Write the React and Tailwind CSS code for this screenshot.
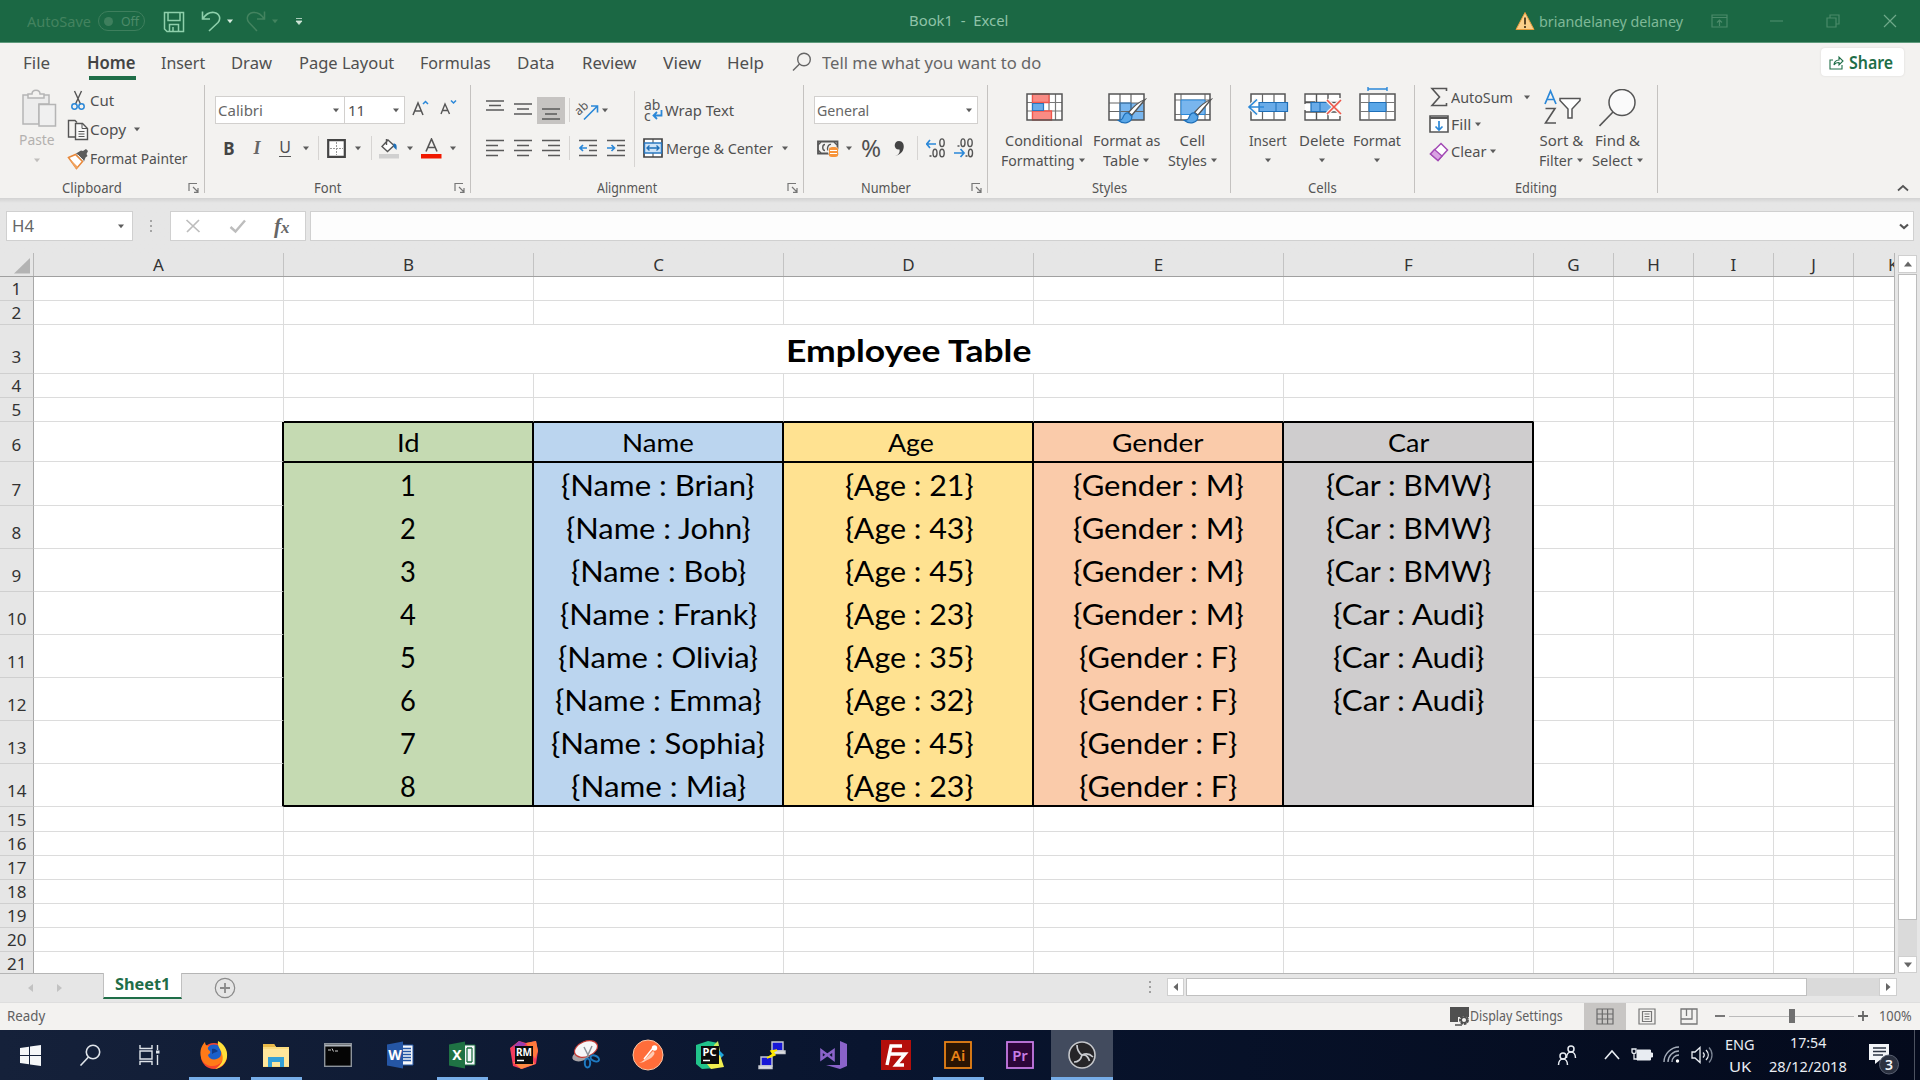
import React, { useLayoutEffect, useRef, useState } from "react";

/* Text that is squeezed or stretched to the width of its box. */
function Fit({ className = "", children }) {
  const outer = useRef(null);
  const inner = useRef(null);
  const [scale, setScale] = useState(1);
  useLayoutEffect(() => {
    setScale(outer.current.clientWidth / inner.current.offsetWidth);
  }, [children]);
  return (
    <span ref={outer} className={"inline-block shrink-0 whitespace-nowrap " + className}>
      <span ref={inner} className="inline-block origin-left" style={{ transform: `scaleX(${scale})` }}>
        {children}
      </span>
    </span>
  );
}

function Svg({ w, h, className = "", children, ...rest }) {
  return (
    <svg width={w} height={h} viewBox={`0 0 ${w} ${h}`} fill="none" className={"shrink-0 " + className} {...rest}>
      {children}
    </svg>
  );
}

const Caret = ({ className = "w-3.5", color = "#5c5c5c" }) => (
  <span className={"flex shrink-0 justify-center " + className}>
    <Svg w={8} h={5}>
      <path d="M1 .5h6L4 4.2z" fill={color} />
    </Svg>
  </span>
);

const Sep = ({ className = "h-6" }) => <span className={"w-px shrink-0 bg-[#d6d4d2] " + className} />;

function Group({ className, title, titleClass, launcher, children }) {
  return (
    <div className={"flex h-[108px] shrink-0 flex-col border-r border-[#c4c2c0] " + className}>
      <div className="h-[88px] shrink-0">{children}</div>
      <div className="flex h-[30px] shrink-0 items-center text-[14px] leading-none text-[#555]">
        <div className="flex flex-1 justify-center">
          <Fit className={titleClass}>{title}</Fit>
        </div>
        {launcher && (
          <Svg w={20} h={12}>
            <path d="M5 9V1.5h8M9 5l5 5M14 6v4.3h-4" stroke="#777" strokeWidth="1.2" />
          </Svg>
        )}
      </div>
    </div>
  );
}

function TitleBar() {
  return (
    <div className="flex h-[43px] items-center border-b border-[#5e9a7c] bg-[#1b6844] text-[15px] leading-none text-[#8fc3a8]">
      <Fit className="ml-[27px] w-16 text-[#43835f]">AutoSave</Fit>
      <div className="ml-[7px] flex h-5 w-[47px] items-center rounded-full border border-[#3e7f5d] text-[13px] text-[#4d8b69]">
        <span className="ml-[5px] size-[9px] rounded-full bg-[#3e7f5d]" />
        <Fit className="ml-2 w-[18px]">Off</Fit>
      </div>
      <Svg w={22} h={22} className="ml-[18px] mt-0.5" stroke="#8ed0ab" strokeWidth="1.5">
        <path d="M1.5 1.5h19v19H4l-2.500-2.500zM5 1.500v8h12v-8M6.500 20.500v-7h9v7M10 16v4" />
      </Svg>
      <Svg w={20} h={22} className="ml-4" stroke="#8ed0ab" strokeWidth="1.600">
        <path d="M1.500 1.500v7.500h7.500M2 8.500C5 4 9 2 13 2.500c6 1 7 6.500 4 10L8 21" />
      </Svg>
      <Caret className="ml-[3px] w-3" color="#d8ecdf" />
      <Svg w={20} h={22} className="ml-2.5" stroke="#43835f" strokeWidth="1.500">
        <path d="M18.500 1.500v7.500h-7.500M18 8.500C15 4 11 2 7 2.500c-6 1-7 6.500-4 10l8 8.500" />
      </Svg>
      <Caret className="ml-[3px] w-3" color="#43835f" />
      <Svg w={8} h={8} className="ml-[14px]">
        <path d="M1 1.500h6M1 4h6L4 7.500z" fill="#cfe6d8" stroke="#cfe6d8" strokeWidth=".8" />
      </Svg>
      <Fit className="ml-[606px] mb-0.5 w-[99px] whitespace-pre">{"Book1  -  Excel"}</Fit>
      <Svg w={20} h={20} className="ml-[507px]">
        <path d="M10 1.500L19 18.500H1z" fill="#fbd08a" stroke="#e59a3c" />
        <path d="M10 6.500v7M10 15v2" stroke="#4c3a1c" strokeWidth="1.800" />
      </Svg>
      <Fit className="ml-1 w-36 text-[#7fb898]">briandelaney delaney</Fit>
      <Svg w={17} h={14} className="ml-[28px]" stroke="#4a8a69" strokeWidth="1.200">
        <path d="M1 1h15v12H1zM1 3.500h15M8.500 12V6M6 8.500L8.500 6 11 8.500" />
      </Svg>
      <Svg w={13} h={4} className="ml-[42px]" stroke="#4a8a69" strokeWidth="1.200">
        <path d="M0 2h13" />
      </Svg>
      <Svg w={14} h={14} className="ml-[43px]" stroke="#4a8a69" strokeWidth="1.200">
        <path d="M1 4h9v9H1zM4 4V1h9v9h-3" />
      </Svg>
      <Svg w={14} h={14} className="ml-[43px]" stroke="#6fa98a" strokeWidth="1.200">
        <path d="M1 1l12 12M13 1L1 13" />
      </Svg>
    </div>
  );
}

function Tabs() {
  return (
    <div className="flex h-[42px] items-start text-[17px] leading-none text-[#4f4f4f]">
      <div className="flex h-[38px] items-center">
        <Fit className="ml-[23px] w-[27px]">File</Fit>
        <div className="relative ml-[37px] w-[49px]">
          <Fit className="w-[49px] font-semibold text-[#444]">Home</Fit>
          <span className="absolute -bottom-[9px] left-0.5 h-1 w-[47px] bg-[#1f6e48]" />
        </div>
        <Fit className="ml-[25px] w-[44px]">Insert</Fit>
        <Fit className="ml-[26px] w-[41px]">Draw</Fit>
        <Fit className="ml-[27px] w-[95px]">Page Layout</Fit>
        <Fit className="ml-[26px] w-[71px]">Formulas</Fit>
        <Fit className="ml-[26px] w-[38px]">Data</Fit>
        <Fit className="ml-[27px] w-[54px]">Review</Fit>
        <Fit className="ml-[27px] w-[38px]">View</Fit>
        <Fit className="ml-[26px] w-[37px]">Help</Fit>
        <Svg w={20} h={20} className="ml-[28px]" stroke="#666" strokeWidth="1.400">
          <circle cx="12" cy="7.500" r="6.300" />
          <path d="M7.500 12L1 18.500" />
        </Svg>
        <Fit className="ml-[10px] w-[219px] text-[#666]">Tell me what you want to do</Fit>
      </div>
      <div className="ml-auto mr-4 mt-[5px] flex h-7 w-[83px] items-center rounded-sm bg-white text-[#1f6e48] shadow-[0_0_2px_#d5d3d1]">
        <Svg w={15} h={15} className="ml-2" stroke="#1f6e48" strokeWidth="1.100">
          <path d="M4 5H1v9h12v-4M5 10c0-3 2-5 5-5V2l4 4-4 4V7.500c-2 0-4 .5-5 2.500z" />
        </Svg>
        <Fit className="ml-[5px] w-[44px] font-semibold">Share</Fit>
      </div>
    </div>
  );
}

function ClipboardGroup() {
  return (
    <Group className="w-[205px]" title="Clipboard" titleClass="w-[60px]" launcher>
      <div className="flex">
        <div className="ml-[18px] flex w-[38px] flex-col items-center text-[#b3b1af]">
          <Svg w={36} h={40} className="ml-1 mt-1" stroke="#b5b5b5" strokeWidth="1.500">
            <path d="M2 6h26v9H18v20H2z" fill="#ececec" />
            <path d="M7 9V5h4c0-5 8-5 8 0h4v4z" fill="#f3f2f0" />
            <path d="M18 15.500h16.500v21.500H18z" fill="#f0f0f0" />
          </Svg>
          <Fit className="mt-px w-9 text-[15px] leading-[18px]">Paste</Fit>
          <Caret className="mt-2.5 w-3" color="#c0bebc" />
        </div>
        <div className="ml-[11px] pt-px">
          <div className="flex h-[29px] items-center">
            <Svg w={22} h={22}>
              <path d="M7.500 1l6 13M14.500 1l-6 13" stroke="#555" strokeWidth="1.400" />
              <circle cx="7.500" cy="16.500" r="2.700" stroke="#2b88d8" strokeWidth="1.500" />
              <circle cx="14.500" cy="16.500" r="2.700" stroke="#2b88d8" strokeWidth="1.500" />
            </Svg>
            <Fit className="ml-px w-6">Cut</Fit>
          </div>
          <div className="flex h-[29px] items-center">
            <Svg w={22} h={22} stroke="#555" strokeWidth="1.400">
              <path d="M8 18H1.500V1.500H8L10 3.500" fill="none" />
              <path d="M8.500 4.500h7l5 5v11h-12z" fill="#f8f8f8" />
              <path d="M15 4.500v5h5M11.500 12.500h6M11.500 15h6M11.500 17.500h6" strokeWidth="1" />
            </Svg>
            <Fit className="ml-px w-9">Copy</Fit>
            <Caret className="ml-[7px]" />
          </div>
          <div className="flex h-[29px] items-center">
            <Svg w={22} h={22}>
              <path d="M1.500 9.500l7-3 7 7-6 7z" fill="#fff" stroke="#e8883a" strokeWidth="1.500" />
              <path d="M2 10l9 9-2 2z" fill="#f0a35e" />
              <path d="M9 5.500l8 8 1.500-4L20.500 8l-1-2 1.500-3-2-2-3 2-2-.500z" fill="#5c5c5c" />
              <path d="M10.500 6.500l6 6" stroke="#f3f2f0" />
            </Svg>
            <Fit className="ml-px w-[98px]">Format Painter</Fit>
          </div>
        </div>
      </div>
    </Group>
  );
}

function FontGroup() {
  return (
    <Group className="w-[266px]" title="Font" titleClass="w-[27px]" launcher>
      <div className="flex h-[39px] items-center pl-2.5 pt-[11px]">
        <div className="flex h-7 w-[130px] items-center border border-[#d2d0ce] bg-white">
          <Fit className="ml-0.5 w-[45px] text-[#666]">Calibri</Fit>
          <Caret className="ml-auto mr-0.5 w-3" />
        </div>
        <div className="flex h-7 w-[60px] items-center border border-l-0 border-[#d2d0ce] bg-white">
          <Fit className="ml-[3px] w-[17px]">11</Fit>
          <Caret className="ml-auto mr-0.5 w-3" />
        </div>
        <Svg w={18} h={18} className="ml-[7px] -mt-1">
          <path d="M1 16L6 4l5 12M3 12h6" stroke="#555" strokeWidth="1.500" />
          <path d="M11 5l2.500-2.500L16 5" stroke="#2b88d8" strokeWidth="1.500" />
        </Svg>
        <Svg w={18} h={18} className="ml-2.5 -mt-1">
          <path d="M1 15L5 5l4.500 10M3 11.500h5" stroke="#555" strokeWidth="1.400" />
          <path d="M11 1.500L13.500 4 16 1.500" stroke="#2b88d8" strokeWidth="1.500" />
        </Svg>
      </div>
      <div className="mt-2.5 flex h-7 items-center pl-2.5 text-[17px]">
        <span className="w-7 text-center font-bold text-[#444]">B</span>
        <span className="w-7 text-center font-['Liberation_Serif'] text-[18px] font-bold italic text-[#666]">I</span>
        <span className="flex w-7 justify-center"><span className="w-3 border-b-[1.500px] border-[#555] pb-px text-center text-[16px]">U</span></span>
        <Caret />
        <Sep className="ml-[5px] h-6" />
        <Svg w={19} h={19} className="ml-2">
          <path d="M1.200 1.200h16.600v16.600H1.200z" fill="#fff" stroke="#444" strokeWidth="2.200" />
          <path d="M9.500 3v13M3 9.500h13" stroke="#999" strokeDasharray="2 1" />
        </Svg>
        <Caret className="ml-[5px] w-3.5" />
        <Sep className="ml-1.5 h-6" />
        <Svg w={20} h={21} className="ml-[7px]">
          <path d="M9 2L3 8.500l5.500 5L15 7.500 9 2zM7.500 1v6" fill="#fff" stroke="#555" strokeWidth="1.400" />
          <path d="M14.500 5.500c3 0 3.500 2 3 6.500l-3-3z" fill="#1e6fb8" />
          <path d="M0 16h20v4.500H0z" fill="#d0d0d0" />
        </Svg>
        <Caret className="ml-1 w-3.5" />
        <Svg w={21} h={21} className="ml-1">
          <path d="M5 13.500L10.500 1l5.500 12.500M7 9.500h7" stroke="#555" strokeWidth="1.600" />
          <path d="M0 16h20.500v4.500H0z" fill="#f01800" />
        </Svg>
        <Caret className="ml-1 w-3.5" />
      </div>
    </Group>
  );
}

const Lines = ({ d, className = "" }) => (
  <Svg w={18} h={20} className={className}>
    <path d={d} stroke="#5a5a5a" strokeWidth="1.600" />
  </Svg>
);

function IndentIcon({ right, className }) {
  return (
    <Svg w={18} h={20} className={className}>
      <path d="M0 2.500h18M10 7.500h8M10 12.500h8M0 17.500h18" stroke="#5a5a5a" strokeWidth="1.600" />
      <path d={right ? "M0 10h7M4.500 7L7.500 10l-3 3" : "M8 10H1M4 7l-3 3 3 3"} stroke="#2b88d8" strokeWidth="1.700" />
    </Svg>
  );
}

function AlignmentGroup() {
  return (
    <Group className="w-[333px]" title="Alignment" titleClass="w-[60px]" launcher>
      <div className="flex">
        <div className="w-[163px]">
          <div className="mt-[11px] flex h-7 items-center">
            <Lines className="ml-[15px] -mt-1.5" d="M0 4h18M3 8.500h12M0 13h18" />
            <Lines className="ml-2.5" d="M0 4h18M3 9h12M0 14h18" />
            <span className="ml-[5px] flex h-[27px] w-7 items-end justify-center bg-[#c6c4c2]">
              <Lines d="M0 5h18M3 10h12M0 15h18" />
            </span>
            <Sep className="ml-1 h-6" />
            <Svg w={22} h={22} className="ml-[7px] overflow-visible">
              <text x="-1" y="12" fontSize="12" fill="#555" fontFamily="Noto Sans" transform="rotate(-42 7 11)">ab</text>
              <path d="M7 20.500L20 7.500M14 7h6.500v6.500" stroke="#2b88d8" strokeWidth="1.600" />
            </Svg>
            <Caret className="w-3" />
          </div>
          <div className="mt-2.5 flex h-7 items-center">
            <Lines className="ml-[15px]" d="M0 2.500h18M0 7.500h12M0 12.500h18M0 17.500h12" />
            <Lines className="ml-2.5" d="M0 2.500h18M3 7.500h12M0 12.500h18M3 17.500h12" />
            <Lines className="ml-2.5" d="M0 2.500h18M6 7.500h12M0 12.500h18M6 17.500h12" />
            <Sep className="ml-[9px] h-6" />
            <IndentIcon className="ml-[9px]" />
            <IndentIcon right className="ml-2.5" />
          </div>
        </div>
        <Sep className="mt-1.5 h-[76px]" />
        <div>
          <div className="mt-[11px] flex h-7 items-center">
            <div className="relative ml-[9px] h-[22px] w-[19px] text-[14px] leading-[11px] text-[#555]">
              <Fit className="block w-4">ab</Fit>
              <Fit className="block w-[7px]">c</Fit>
              <Svg w={11} h={11} className="absolute right-0 bottom-0">
                <path d="M9.500 0v5.500H2M5 2L1.500 5.500 5 9" stroke="#2b88d8" strokeWidth="1.800" />
              </Svg>
            </div>
            <Fit className="ml-0.5 w-[69px]">Wrap Text</Fit>
          </div>
          <div className="mt-2.5 flex h-7 items-center">
            <Svg w={20} h={20} className="ml-2">
              <path d="M1 1h18v18H1z" fill="#fff" stroke="#444" strokeWidth="1.700" />
              <path d="M10 1v4M10 15v4" stroke="#444" />
              <path d="M1.500 5h17v10h-17z" fill="#cfe4f7" stroke="#2b78c0" strokeWidth="1.400" />
              <path d="M4 10h12M6.500 7.500L4 10l2.500 2.500M13.500 7.500L16 10l-2.500 2.500" stroke="#1e6fb8" strokeWidth="1.400" />
            </Svg>
            <Fit className="ml-[3px] w-[107px]">Merge &amp; Center</Fit>
            <Caret className="ml-2" />
          </div>
        </div>
      </div>
    </Group>
  );
}

function NumberGroup() {
  return (
    <Group className="w-[184px]" title="Number" titleClass="w-[50px]" launcher>
      <div className="h-[39px] pl-2.5 pt-[11px]">
        <div className="flex h-7 w-[164px] items-center border border-[#d2d0ce] bg-white">
          <Fit className="ml-0.5 w-[52px] text-[#666]">General</Fit>
          <Caret className="ml-auto mr-0.5 w-3" />
        </div>
      </div>
      <div className="mt-2.5 flex h-7 items-center">
        <Svg w={22} h={20} className="ml-[13px]">
          <path d="M1 3.500h19.500v12H1z" fill="#f3f2f0" stroke="#555" strokeWidth="1.800" />
          <path d="M1 7l3-3M1 12l3 3M20 7l-3-3M8 6.500c-3 0-3 6 0 6M14 6.500c-3-1-5 6-2 6" stroke="#555" strokeWidth="1.400" />
          <ellipse cx="16.500" cy="13.500" rx="5.500" ry="5.500" fill="#f3f2f0" />
          <path d="M12 10.500c0-2 9-2 9 0v7c0 2-9 2-9 0z" fill="#f7943a" />
          <path d="M13 12.500h7M13 15.500h7" stroke="#fff" />
        </Svg>
        <Caret className="ml-1 w-3" />
        <Fit className="ml-1.5 w-5 text-[23px] leading-none">%</Fit>
        <Svg w={13} h={17} className="ml-3">
          <path d="M2 16c4-1 5-4 4.500-6.500C0 10 .5 1 6 1c7 0 7 13-4 15z" fill="#444" />
        </Svg>
        <Sep className="ml-[11px] h-6" />
        <Svg w={20} h={20} className="ml-2">
          <path d="M0 6h10M4 2L.7 6 4 10" stroke="#2b88d8" strokeWidth="1.700" />
          <ellipse cx="16" cy="4.700" rx="2.200" ry="3.800" stroke="#555" strokeWidth="1.400" />
          <ellipse cx="9" cy="15" rx="2" ry="3.800" stroke="#555" strokeWidth="1.400" />
          <ellipse cx="16" cy="15" rx="2.200" ry="3.800" stroke="#555" strokeWidth="1.400" />
          <path d="M3.500 18h2" stroke="#555" strokeWidth="1.600" />
        </Svg>
        <Svg w={20} h={20} className="ml-2">
          <path d="M0 15h10M6.500 11L10 15l-3.500 4" stroke="#2b88d8" strokeWidth="1.700" />
          <ellipse cx="9" cy="4.700" rx="2" ry="3.800" stroke="#555" strokeWidth="1.400" />
          <ellipse cx="16" cy="4.700" rx="2.200" ry="3.800" stroke="#555" strokeWidth="1.400" />
          <ellipse cx="16.500" cy="15" rx="2" ry="3.800" stroke="#555" strokeWidth="1.400" />
          <path d="M3.500 8h2M11.500 18h2" stroke="#555" strokeWidth="1.600" />
        </Svg>
      </div>
    </Group>
  );
}

const Brush = () => (
  <>
    <path d="M38 10.500L25 26l-3.500-2.500C27 17 31 13 38 10.500z" fill="#fff" stroke="#555" strokeWidth="1.300" />
    <path d="M21.500 24c-4-1-5 3-6 5.500-1 1.500-3 2-4 2 5 4 13 3 13.500-4z" fill="#5aa7e8" stroke="#1e6fb8" strokeWidth="1.200" />
  </>
);

/* Big ribbon button: icon above one or two lines of text. */
function BigButton({ className, icon, line1, w1, line2, w2 }) {
  return (
    <div className={"flex shrink-0 flex-col items-center leading-none " + className}>
      <div className="flex h-[45px] items-start pt-1">{icon}</div>
      <div className="flex h-5 items-center"><Fit className={w1}>{line1}</Fit></div>
      <div className="flex h-5 items-center">
        {line2 && <Fit className={w2}>{line2}</Fit>}
        <Caret className={line2 ? "ml-[3px] w-2" : "w-2"} />
      </div>
    </div>
  );
}

function StylesGroup() {
  return (
    <Group className="w-[243px]" title="Styles" titleClass="w-[35px]">
      <div className="flex">
        <BigButton className="ml-3 w-[87px]" line1="Conditional" w1="w-[78px]" line2="Formatting" w2="w-[74px]" icon={
          <Svg w={40} h={36}>
            <path d="M3 5h35v26H3z" fill="#fff" />
            <path d="M3 13.500h35M3 22h35M8.500 5v26M25 5v26M31.500 5v26" stroke="#777" strokeWidth="1.200" />
            <path d="M8.500 5H25v8.500H8.500zM8.500 22h19v9h-19z" fill="#f98b84" stroke="#f0564c" strokeWidth="1.300" />
            <path d="M8.500 14.500h11v7h-11z" fill="#69abe8" stroke="#2b78c0" strokeWidth="1.200" />
            <path d="M3 5h35v26H3z" stroke="#555" strokeWidth="1.500" />
          </Svg>} />
        <BigButton className="ml-[5px] w-[69px]" line1="Format as" w1="w-[67px]" line2="Table" w2="w-9" icon={
          <Svg w={40} h={36}>
            <path d="M2 5h35v26H2z" fill="#fff" />
            <path d="M13 14h24v17H13z" fill="#79b6ee" />
            <path d="M2 14h35M2 22.500h35M13 5v26M24 5v26" stroke="#666" strokeWidth="1.200" />
            <path d="M2 5h35v26H2z" stroke="#555" strokeWidth="1.500" />
            <path d="M13 14h11v17H13z" stroke="#2b78c0" />
            <Brush />
          </Svg>} />
        <BigButton className="ml-[5px] w-[53px]" line1="Cell" w1="w-[26px]" line2="Styles" w2="w-[39px]" icon={
          <Svg w={40} h={36}>
            <path d="M2 5h35v26H2z" fill="#fff" />
            <path d="M2 11h35M2 25.500h35M8 5v26M32 5v26" stroke="#777" strokeWidth="1.200" />
            <path d="M8 11h24v14.500H8z" fill="#79b6ee" stroke="#2b88d8" />
            <path d="M2 5h35v26H2z" stroke="#555" strokeWidth="1.500" />
            <Brush />
          </Svg>} />
      </div>
    </Group>
  );
}

function CellsGroup() {
  return (
    <Group className="w-[184px]" title="Cells" titleClass="w-[29px]">
      <div className="flex">
        <BigButton className="ml-[13px] w-12" line1="Insert" w1="w-[38px]" icon={
          <Svg w={42} h={36}>
            <path d="M4 5h34v26H4z" fill="#fff" stroke="#555" strokeWidth="1.500" />
            <path d="M15.500 5v26M27 5v26" stroke="#666" strokeWidth="1.200" />
            <path d="M12 13.500h28.500v9H12z" fill="#69abe8" stroke="#1e6fb8" strokeWidth="1.200" />
            <path d="M29 13.500v9" stroke="#1e6fb8" />
            <path d="M10 10.500L2 18l8 7.500" stroke="#f3f2f0" strokeWidth="4" />
            <path d="M10 10.500L2 18l8 7.500M3 18h14" stroke="#2b88d8" strokeWidth="1.600" />
          </Svg>} />
        <BigButton className="ml-1.5 w-12" line1="Delete" w1="w-[46px]" icon={
          <Svg w={40} h={36}>
            <path d="M3 5h35v26H3z" fill="#fff" />
            <path d="M38 9V5H3v8h10M3 23v8h35v-4M3 13v2M3 21v2h35M14.500 5v8M26 5v8M14.500 23v8M26 23v8M3 13.500h35" stroke="#555" strokeWidth="1.400" />
            <path d="M9 13.500h17l4 4.500-4 4.500H9z" fill="#69abe8" stroke="#1e6fb8" strokeWidth="1.200" />
            <path d="M18 13.500v9" stroke="#1e6fb8" />
            <path d="M25 11l14 14M39 11L25 25" stroke="#f3f2f0" strokeWidth="4" />
            <path d="M25 11l14 14M39 11L25 25" stroke="#ee5548" strokeWidth="1.600" />
          </Svg>} />
        <BigButton className="ml-1.5 w-[49px]" line1="Format" w1="w-[48px]" icon={
          <Svg w={40} h={36} className="overflow-visible">
            <path d="M3 5h35v26H3z" fill="#fff" stroke="#555" strokeWidth="1.500" />
            <path d="M3 13.500h35M3 22.500h35M12 5v26M29 5v26" stroke="#777" strokeWidth="1.200" />
            <path d="M12 13.500h17v9H12z" fill="#5aa7e8" stroke="#1e6fb8" />
            <path d="M11 0h19M11-2v4M30-2v4" stroke="#2b88d8" strokeWidth="1.400" />
          </Svg>} />
      </div>
    </Group>
  );
}

function EditingGroup() {
  return (
    <Group className="w-[243px]" title="Editing" titleClass="w-[42px]">
      <div className="flex">
        <div className="ml-3.5 w-[104px]">
          <div className="flex h-[25px] items-center">
            <Svg w={20} h={20} className="-mt-px">
              <path d="M17.500 4V1.500H3l7.500 8.500L3 18.500h14.500V16" stroke="#555" strokeWidth="1.600" />
            </Svg>
            <Fit className="ml-0.5 w-[62px]">AutoSum</Fit>
            <Caret className="ml-2 w-3" />
          </div>
          <div className="flex h-7 items-center">
            <Svg w={20} h={18}>
              <path d="M1 1h18v16H1z" fill="#fff" stroke="#555" strokeWidth="1.600" />
              <path d="M1 3h18" stroke="#555" strokeWidth="2" />
              <path d="M10 6v9M6.500 11.500L10 15l3.500-3.500" stroke="#2b88d8" strokeWidth="1.700" />
            </Svg>
            <Fit className="ml-0.5 w-5">Fill</Fit>
            <Caret className="ml-px w-3" />
          </div>
          <div className="flex h-[27px] items-center">
            <Svg w={20} h={20}>
              <path d="M12 1.500L18.500 8l-9.500 10.500L1.500 12z" fill="#fff" stroke="#a34ab5" strokeWidth="1.500" />
              <path d="M5.500 7.500l7.500 6.500-4 4.500L1.500 12z" fill="#d9a3e3" stroke="#a34ab5" strokeWidth="1.300" />
            </Svg>
            <Fit className="ml-0.5 w-[35px]">Clear</Fit>
            <Caret className="ml-px w-3" />
          </div>
        </div>
        <BigButton className="ml-[5px] w-[47px]" line1="Sort &" w1="w-11" line2="Filter" w2="w-[34px]" icon={
          <Svg w={38} h={36}>
            <path d="M2 15L7.500 2 13 15M4 10.500h7" stroke="#2b88d8" strokeWidth="1.700" />
            <path d="M2.500 19.500h9.500L2.500 34H13" stroke="#555" strokeWidth="1.600" />
            <path d="M17 9.500h20v2l-8 8.500v9h-4v-9l-8-8.500z" fill="#fff" stroke="#555" strokeWidth="1.500" />
          </Svg>} />
        <BigButton className="ml-1.5 w-[53px]" line1="Find &" w1="w-[45px]" line2="Select" w2="w-[41px]" icon={
          <Svg w={38} h={38}>
            <circle cx="23" cy="13.500" r="13" fill="#fafafa" stroke="#555" strokeWidth="1.500" />
            <path d="M14 23L.5 37" stroke="#555" strokeWidth="1.600" />
          </Svg>} />
      </div>
    </Group>
  );
}

function Ribbon() {
  return (
    <div className="h-[155px] bg-[#f3f2f0]">
      <Tabs />
      <div className="flex h-[113px] text-[15px] leading-none text-[#505050]">
        <ClipboardGroup />
        <FontGroup />
        <AlignmentGroup />
        <NumberGroup />
        <StylesGroup />
        <CellsGroup />
        <EditingGroup />
        <Svg w={12} h={8} className="mb-[6px] ml-auto mr-[11px] self-end">
          <path d="M1 6.500L6 2l5 4.500" stroke="#555" strokeWidth="1.700" />
        </Svg>
      </div>
    </div>
  );
}

function FormulaBar() {
  return (
    <div className="flex h-[55px] items-start bg-linear-to-b from-[#d2d2d2] to-[#e6e6e6] to-[5px] pt-[13px] text-[16px] leading-none text-[#666]">
      <div className="ml-1.5 flex h-[30px] w-[127px] items-center border border-[#d0d0d0] bg-white">
        <Fit className="ml-[5px] w-[22px]">H4</Fit>
        <Caret className="ml-auto mr-[5px] w-3" />
      </div>
      <Svg w={4} h={16} className="ml-4 mt-2">
        <path d="M1 1h2v2H1zM1 6h2v2H1zM1 11h2v2H1z" fill="#a5a5a5" />
      </Svg>
      <div className="ml-[17px] flex h-[30px] w-[136px] items-center border border-[#d0d0d0] bg-white">
        <Svg w={16} h={16} className="ml-3.5">
          <path d="M1.500 2l13 12M14 2L2 14" stroke="#bdbdbd" strokeWidth="1.700" />
        </Svg>
        <Svg w={18} h={16} className="ml-[28px]">
          <path d="M1.500 9l5 4.500L16 2.500" stroke="#bdbdbd" strokeWidth="2.400" />
        </Svg>
        <span className="ml-[27px] font-['Liberation_Serif'] text-[21px] font-bold italic text-[#666]">f<span className="text-[17px]">x</span></span>
      </div>
      <div className="ml-1 flex h-[30px] w-[1604px] items-center border border-[#d0d0d0] bg-[#fdfdfd]">
        <Svg w={10} h={7} className="ml-auto mr-1">
          <path d="M1 1.500L5 5l4-3.500" stroke="#555" strokeWidth="2.200" />
        </Svg>
      </div>
    </div>
  );
}

const COLUMNS = [
  ["A", "w-[250px]"], ["B", "w-[250px]"], ["C", "w-[250px]"], ["D", "w-[250px]"], ["E", "w-[250px]"], ["F", "w-[250px]"],
  ["G", "w-20"], ["H", "w-20"], ["I", "w-20"], ["J", "w-20"],
];

const FILLS = ["", "bg-[#c5dab2]", "bg-[#bbd5ef]", "bg-[#ffe291]", "bg-[#facbaa]", "bg-[#cfcdce]"];

const HEADINGS = [["Id", "w-[23px]"], ["Name", "w-[72px]"], ["Age", "w-[46px] ml-1.5"], ["Gender", "w-[92px]"], ["Car", "w-[41px]"]];

const M = ["{Gender : M}", "w-[171px]"];
const F = ["{Gender : F}", "w-[158px]"];
const BMW = ["{Car : BMW}", "w-[165px]"];
const AUDI = ["{Car : Audi}", "w-[151px]"];
const DATA = [
  [["{Name : Brian}", "w-[194px]"], "{Age : 21}", M, BMW],
  [["{Name : John}", "w-[185px]"], "{Age : 43}", M, BMW],
  [["{Name : Bob}", "w-[175px]"], "{Age : 45}", M, BMW],
  [["{Name : Frank}", "w-[197px]"], "{Age : 23}", M, AUDI],
  [["{Name : Olivia}", "w-[200px]"], "{Age : 35}", F, AUDI],
  [["{Name : Emma}", "w-[207px]"], "{Age : 32}", F, AUDI],
  [["{Name : Sophia}", "w-[214px]"], "{Age : 45}", F, null],
  [["{Name : Mia}", "w-[175px]"], "{Age : 23}", F, null],
];

const ROW_HEIGHTS = [
  "h-6", "h-6", "h-[49px]", "h-6", "h-6", "h-10", "h-11", "h-[43px]", "h-[43px]", "h-[43px]", "h-[43px]", "h-[43px]",
  "h-[43px]", "h-[43px]", "h-[25px]", "h-6", "h-6", "h-6", "h-6", "h-6", "h-[22px]",
];

function RowNumber({ n }) {
  const tall = n === 3 || (n >= 6 && n <= 14);
  return (
    <div className={"flex w-[34px] shrink-0 items-end justify-center border-b border-r border-b-[#cfcfcf] border-r-[#a8a8a8] bg-[#e6e6e6] text-[17px] text-[#333] " + (n === 21 ? "border-b-transparent" : "")}>
      <Fit className={(n > 9 ? "w-[19px]" : "w-[10px]") + " leading-6 " + (n === 3 || n === 6 ? "mb-1" : tall ? "mb-[3px]" : n === 21 ? "-mb-[3px]" : "-mb-px")}>{n}</Fit>
    </div>
  );
}

function cellContent(n, c) {
  if (n === 6) return HEADINGS[c - 1];
  const row = DATA[n - 7];
  if (c === 1) return [String(n - 6), "w-4"];
  if (c === 3) return [row[1], "w-[129px] ml-[3px]"];
  return c === 2 ? row[0] : row[c - 2];
}

function Cell({ n, c }) {
  const inTable = n >= 6 && n <= 14;
  const width = COLUMNS[c][1];
  if (inTable && c >= 1 && c <= 5) {
    const content = cellContent(n, c);
    return (
      <div
        className={
          "flex shrink-0 items-center justify-center border-r-2 border-black leading-none text-black font-['Lato'] " +
          width + " " + FILLS[c] + " " +
          (n === 6 ? "border-y text-[25px]" : "text-[29px]") +
          (n === 7 ? " border-t" : "") + (n === 14 ? " border-b-2" : "")
        }
      >
        {content && <Fit className={content[1] + (n === 6 ? " mt-px" : n === 14 ? " mt-0.5" : "")}>{content[0]}</Fit>}
      </div>
    );
  }
  const right = inTable && c === 0 ? "border-r-2 border-r-black" : "border-r border-r-[#dcdcdc]";
  const bottom = n === 5 && c >= 1 && c <= 5 ? "border-b-black" : "border-b-[#dcdcdc]";
  return <div className={`shrink-0 border-b ${width} ${right} ${bottom}`} />;
}

function Row({ n }) {
  return (
    <div className={"flex shrink-0 " + ROW_HEIGHTS[n - 1]}>
      <RowNumber n={n} />
      {n === 3 ? (
        <>
          <Cell n={n} c={0} />
          <div className="flex w-[1250px] shrink-0 items-center justify-center border-b border-r border-[#dcdcdc] pt-[3px] font-['Lato'] text-[31px] font-bold leading-none text-black">
            <Fit className="w-[245px]">Employee Table</Fit>
          </div>
          {[6, 7, 8, 9].map((c) => <Cell key={c} n={n} c={c} />)}
        </>
      ) : (
        COLUMNS.map((_, c) => <Cell key={c} n={n} c={c} />)
      )}
      <div className="w-[41px] border-b border-[#dcdcdc]" />
    </div>
  );
}

const ScrollButton = ({ d, className }) => (
  <span className={"flex shrink-0 items-center justify-center border border-[#cfcfcf] bg-white " + className}>
    <Svg w={10} h={10}><path d={d} fill="#666" /></Svg>
  </span>
);

function Sheet() {
  return (
    <div className="flex h-[721px] bg-[#e6e6e6]">
      <div className="w-[1895px] overflow-hidden border-b border-r border-[#b5b5b5]">
        <div className="flex h-6 border-b border-[#a0a0a0] text-[17px] leading-6 text-[#333]">
          <div className="flex w-[34px] shrink-0 justify-end border-r border-[#b8b8b8] pr-[3px] pt-[5px]">
            <Svg w={16} h={16}><path d="M16 0v15.500H0z" fill="#b3b3b3" /></Svg>
          </div>
          {COLUMNS.map(([name, w]) => (
            <div key={name} className={"shrink-0 border-r border-[#c3c3c3] text-center " + w}>{name}</div>
          ))}
          <div className="w-[40px] shrink-0 overflow-hidden pl-[34px]">K</div>
        </div>
        <div className="flex h-[696px] flex-col overflow-hidden bg-white">
          {ROW_HEIGHTS.map((_, i) => <Row key={i} n={i + 1} />)}
        </div>
      </div>
      <div className="ml-[3px] flex w-[19px] flex-col pt-[2px]">
        <ScrollButton className="h-[18px]" d="M1 7.500L5 2.500l4 5z" />
        <span className="mt-px h-[646px] border border-[#bdbdbd] bg-white" />
        <span className="h-9 bg-[#dadada]" />
        <ScrollButton className="h-[17px]" d="M1 2.500L5 7.500l4-5z" />
      </div>
    </div>
  );
}

function SheetTabs() {
  return (
    <div className="flex h-7 bg-[#e6e6e6]">
      <Svg w={8} h={10} className="ml-[27px] mt-[9px]"><path d="M6 1v8L1 5z" fill="#c2c2c2" /></Svg>
      <Svg w={8} h={10} className="ml-5 mt-[9px]"><path d="M2 1v8l5-4z" fill="#c2c2c2" /></Svg>
      <div className="ml-10 -mt-px flex h-[26px] w-[79px] items-start justify-center border-x border-b-2 border-x-[#c0c0c0] border-b-[#1f6e48] bg-white pt-0.5 text-[16px] font-bold leading-[18px] text-[#1f6e48]">
        <Fit className="w-[55px]">Sheet1</Fit>
      </div>
      <Svg w={22} h={22} className="ml-8 mt-[3px]" stroke="#8a8a8a">
        <circle cx="11" cy="11" r="9.700" strokeWidth="1.200" />
        <path d="M11 6v10M6 11h10" strokeWidth="1.800" />
      </Svg>
      <Svg w={4} h={14} className="ml-[912px] mt-[7px]"><path d="M1 0h2v2H1zM1 5h2v2H1zM1 10h2v2H1z" fill="#a0a0a0" /></Svg>
      <ScrollButton className="ml-[15px] mt-1 h-[18px] w-[17px]" d="M7 1L2.500 5 7 9z" />
      <span className="ml-0.5 mt-1 h-[18px] w-[621px] border border-[#c0c0c0] bg-white" />
      <span className="mt-1 h-[18px] w-[72px] bg-[#dadada]" />
      <ScrollButton className="mt-1 h-[18px] w-[18px]" d="M3 1l4.500 4L3 9z" />
    </div>
  );
}

function StatusBar() {
  return (
    <div className="flex h-7 items-center border-t border-[#dedede] bg-[#f3f2f0] pb-px text-[14px] leading-none text-[#606060]">
      <Fit className="ml-[7px] w-[38px]">Ready</Fit>
      <Svg w={20} h={19} className="ml-[1405px]">
        <path d="M0 0h19v10H8v5H0z" fill="#505050" />
        <path d="M5 18h7" stroke="#505050" strokeWidth="1.500" />
        <circle cx="14" cy="13" r="3.700" fill="#f3f2f0" stroke="#505050" strokeWidth="2.500" strokeDasharray="2.500 .8" />
        <circle cx="14" cy="13" r="2.800" stroke="#505050" strokeWidth="1.500" />
      </Svg>
      <Fit className="w-[93px]">Display Settings</Fit>
      <span className="ml-[21px] flex h-[27px] w-[42px] shrink-0 items-center justify-center bg-[#c8c6c4]">
        <Svg w={18} h={17} stroke="#6a6a6a"><path d="M1 1h16v15H1zM1 6h16M1 11h16M6.300 1v15M11.600 1v15" strokeWidth="1.200" /></Svg>
      </span>
      <Svg w={18} h={17} className="ml-3" stroke="#777">
        <path d="M1 1h16v15H1zM4.500 3.500h9v10h-9zM6.500 6h5M6.500 8.500h5M6.500 11h5" strokeWidth="1.200" />
      </Svg>
      <Svg w={18} h={17} className="ml-6" stroke="#777">
        <path d="M1 1h16v15H1zM1 11h11V1M6.500 1v7" strokeWidth="1.300" />
      </Svg>
      <span className="ml-[17px] h-0.5 w-2.5 shrink-0 bg-[#777]" />
      <span className="ml-1 flex h-4 w-[125px] shrink-0 items-center bg-[linear-gradient(#bbb,#bbb)] bg-[length:100%_1px] bg-center bg-no-repeat">
        <span className="ml-[60px] h-[14px] w-1.5 bg-[#707070]" />
      </span>
      <Svg w={12} h={12} className="ml-[3px]"><path d="M1 6h10M6 1v10" stroke="#666" strokeWidth="1.800" /></Svg>
      <Fit className="ml-2.5 w-[33px]">100%</Fit>
    </div>
  );
}

function AppSlot({ running, active, children }) {
  return (
    <div className={"flex h-[50px] w-[62px] shrink-0 flex-col items-center " + (active ? "bg-[#424b5e]" : "")}>
      <div className="flex h-[47px] items-center pt-[3px]">{children}</div>
      {(running || active) && <span className={"h-[3px] bg-[#76ade8] " + (active ? "w-[62px]" : "w-[51px]")} />}
    </div>
  );
}

const OfficeIcon = ({ color, letter, sheet }) => (
  <Svg w={28} h={28}>
    <path d="M14 4h13v20H14z" fill="#f5f7fa" stroke={color} />
    <path d={sheet ? "M19 7v14M24 7v14M19 7h5M19 21h5" : "M16 7.500h9M16 10.500h9M16 13.500h9M16 16.500h9M16 19.500h9"} stroke={color} strokeWidth="1.300" />
    <path d="M1 3.500L17 .500v27L1 24.500z" fill={color} />
    <text x="9" y="19" textAnchor="middle" fontSize="14" fontWeight="700" fill="#fff" fontFamily="Noto Sans">{letter}</text>
  </Svg>
);

const AdobeIcon = ({ label, color, bg }) => (
  <Svg w={28} h={28}>
    <rect x="1" y="1" width="26" height="26" fill={bg} stroke={color} strokeWidth="1.800" />
    <text x="14" y="19.500" textAnchor="middle" fontSize="15" fontWeight="600" fill={color} fontFamily="Noto Sans">{label}</text>
  </Svg>
);

const Person = ({ x, y }) => (
  <g stroke="#e8ecf2" strokeWidth="1.500">
    <circle cx={x} cy={y} r="3" />
    <path d={`M${x - 4.5} ${y + 9}c0-8 9-8 9 0`} />
  </g>
);

function Taskbar() {
  return (
    <div className="flex h-[50px] items-start bg-linear-to-r from-[#15213a] via-[#09152f] via-45% to-[#040a1c] text-[15px] leading-none text-[#e9edf3]">
      <div className="flex h-[50px] w-[60px] items-center justify-center">
        <Svg w={21} h={21}><path d="M0 3l9-1.300V10H0zM10 1.500L21 0v10H10zM0 11h9v8.300L0 18zM10 11h11v10l-11-1.500z" fill="#f4f6f8" /></Svg>
      </div>
      <div className="flex h-[50px] w-[60px] items-center justify-center">
        <Svg w={22} h={22} stroke="#dfe4ea" strokeWidth="1.600"><circle cx="14" cy="8" r="6.700" /><path d="M9.500 13L1.500 21.500" /></Svg>
      </div>
      <div className="flex h-[50px] w-[63px] items-center justify-center pr-1">
        <Svg w={22} h={20} stroke="#dfe4ea" strokeWidth="1.400">
          <path d="M1 0v3.500h12V0M1 20v-3.500h12V20M1 6h12v8H1zM18.500 0v5M18.500 10v10" />
          <path d="M17 5.500h3.500v3H17z" fill="#dfe4ea" stroke="none" />
        </Svg>
      </div>
      <AppSlot running>
        <Svg w={30} h={30}>
          <circle cx="15" cy="16" r="13" fill="#f6442c" />
          <circle cx="15" cy="13" r="8.500" fill="#1b5fc9" />
          <path d="M1.500 15C1 8 4 4 6 2c0 3 2 4 4 4-2 2-1 4 1 5 1 2-1 3-2 4 1 5 8 6 12 2 2-3 1-6 0-8 4 2 5 8 2 12-5 8-20 7-21.500-6z" fill="#ff7a18" />
          <path d="M19 1c6 3 10 9 9 16-1 6-6 11-12 12 7-4 9-10 7-15-1-5-5-7-4-13z" fill="#ffe03a" />
          <path d="M13 9c3-1 4 1 6 2-2 2-4 1-6 3z" fill="#123a86" />
        </Svg>
      </AppSlot>
      <AppSlot running>
        <Svg w={28} h={25}>
          <path d="M1 1h11l2 3h13v20H1z" fill="#fbdc7f" />
          <path d="M1 1h11l2 3H1z" fill="#e9b949" />
          <path d="M1 6h26v17H1z" fill="#ffe69b" />
          <path d="M6 24V14h16v10h-4v-5h-8v5z" fill="#35a0d6" />
        </Svg>
      </AppSlot>
      <AppSlot>
        <Svg w={28} h={24}>
          <rect x=".7" y=".7" width="26.600" height="22.600" fill="#050505" stroke="#8d949c" strokeWidth="1.400" />
          <path d="M1 2.500h26" stroke="#aeb4bb" strokeWidth="2" />
          <path d="M4 7h3M8 5.500l1.500 3M11 8h3" stroke="#ccc" />
        </Svg>
      </AppSlot>
      <AppSlot><OfficeIcon color="#2556a5" letter="W" /></AppSlot>
      <AppSlot running><OfficeIcon color="#1f7244" letter="X" sheet /></AppSlot>
      <AppSlot>
        <Svg w={30} h={30}>
          <path d="M1 8l9-7 7 2 10-2 2 10-2 13-14 5-9-3z" fill="#f43c5e" />
          <path d="M17 3l10-2 2 10-3 8z" fill="#ff7a3c" />
          <path d="M10 1l7 3-6 5-7-2z" fill="#9a3fb0" />
          <path d="M4 22l8 7 14-5-2-3z" fill="#ff8b42" />
          <rect x="6" y="6" width="18" height="18" fill="#0b0b0b" />
          <text x="7" y="15.500" fontSize="10" fontWeight="700" fill="#fff" fontFamily="Noto Sans" textLength="16" lengthAdjust="spacingAndGlyphs">RM</text>
          <path d="M8 20.500h7" stroke="#fff" strokeWidth="1.500" />
        </Svg>
      </AppSlot>
      <AppSlot>
        <Svg w={30} h={30}>
          <ellipse cx="10" cy="16" rx="9" ry="5" fill="#a7a3a6" transform="rotate(-15 10 16)" />
          <ellipse cx="15" cy="9" rx="12" ry="7.500" fill="#f6f6f8" stroke="#c43a34" strokeWidth="1.200" transform="rotate(-22 15 9)" />
          <path d="M13 7l5 10M21 6l-5 11" stroke="#8c9198" strokeWidth="1.500" />
          <ellipse cx="16.500" cy="23" rx="2.700" ry="4.500" stroke="#1e7ac2" strokeWidth="2" />
          <ellipse cx="24" cy="18.500" rx="4.500" ry="2.700" stroke="#1e7ac2" strokeWidth="2" transform="rotate(25 24 18)" />
        </Svg>
      </AppSlot>
      <AppSlot>
        <Svg w={32} h={32}>
          <circle cx="16" cy="16" r="15" fill="#ff6d3a" stroke="#f9c6a6" />
          <path d="M7 24c3-1 5-3 8-6l6-6c2 1 2 3 0 5-2 3-7 4-9 6z" fill="#ffe2d2" opacity=".8" />
          <path d="M12 20l9-11" stroke="#fff" strokeWidth="1.500" />
          <circle cx="22.500" cy="9" r="2.700" fill="#fff" />
        </Svg>
      </AppSlot>
      <AppSlot>
        <Svg w={30} h={30}>
          <path d="M1 5l12-4 10 2 1 5-4 20-13 1-6-5z" fill="#21c48b" />
          <path d="M19 5l4-4 2 10-7 2z" fill="#c9ec5b" />
          <path d="M24 10l5 5-5 5z" fill="#1fa5dc" />
          <path d="M12 24l13-9 4 12-13 2z" fill="#f1ee4f" />
          <rect x="6" y="6" width="18" height="18" fill="#0b0b0b" />
          <text x="7.500" y="15.500" fontSize="10" fontWeight="700" fill="#fff" fontFamily="Noto Sans" textLength="14" lengthAdjust="spacingAndGlyphs">PC</text>
          <path d="M8 20.500h7" stroke="#fff" strokeWidth="1.500" />
        </Svg>
      </AppSlot>
      <AppSlot>
        <Svg w={28} h={30}>
          <g stroke="#c9ccd2" strokeWidth="1.400">
            <path d="M14 2h11v9H14zM3 17h11v9H3z" fill="#1717d6" />
            <path d="M16 11h11v2.500H16zM1 26h13v2.500H1z" fill="#e4e4e4" />
          </g>
          <path d="M19 10l-6 1 2 3-6 4 8-3-2-3z" fill="#ffe800" stroke="#ffe800" strokeWidth="1.500" />
        </Svg>
      </AppSlot>
      <AppSlot>
        <Svg w={30} h={30}>
          <path d="M21 1l7 3v22l-7 3-14-4 14 0z" fill="#8a63c9" />
          <path d="M2.500 10.500v8.500L14.500 10.500v9z" stroke="#8a63c9" strokeWidth="2.600" />
        </Svg>
      </AppSlot>
      <AppSlot>
        <Svg w={30} h={30}>
          <rect width="30" height="30" fill="#b40f0b" />
          <path d="M6 25L10 6h11M8 14h10M15 14h9l-9 11h8" stroke="#fff" strokeWidth="3.400" />
        </Svg>
      </AppSlot>
      <AppSlot running><AdobeIcon label="Ai" color="#e98317" bg="#2b1503" /></AppSlot>
      <AppSlot><AdobeIcon label="Pr" color="#c77be4" bg="#2c0538" /></AppSlot>
      <AppSlot active>
        <Svg w={28} h={28}>
          <circle cx="14" cy="14" r="13" fill="#262528" stroke="#c4c6ca" strokeWidth="1.600" />
          <g stroke="#c9cbd0" strokeWidth="1.700">
            <path d="M9 4c0 5 2 8 5 10 4-1 6 1 7.500 6" />
            <path d="M14 14c4-2 8-1 11 2M14 14c-1 4-3 7-8 7" />
          </g>
        </Svg>
      </AppSlot>
      <Svg w={22} h={22} className="ml-[443px] mt-3.5"><Person x={15} y={5} /><Person x={7} y={12} /></Svg>
      <Svg w={18} h={12} className="ml-[25px] mt-[19px]" stroke="#e8ecf2" strokeWidth="1.600"><path d="M2 10l7-8 7 8" /></Svg>
      <Svg w={22} h={16} className="ml-2.5 mt-[17px]">
        <path d="M6 3h13.500v10H6zM20 6h1.500v4H20z" fill="#e8ecf2" stroke="#e8ecf2" />
        <path d="M1 2h4v3c0 2-4 2-4 0zM3 6v6h4" stroke="#e8ecf2" strokeWidth="1.300" />
      </Svg>
      <Svg w={18} h={18} className="ml-2.5 mt-4" stroke="#a5adba" strokeWidth="1.400">
        <path d="M1 16C1 8 8 1 16 1M5 16C5 10 10 5 16 5M9 16c0-4 3-7 7-7" />
        <circle cx="14.500" cy="15" r="1.700" fill="#fff" stroke="none" />
      </Svg>
      <Svg w={22} h={18} className="ml-2.5 mt-4" stroke="#e8ecf2" strokeWidth="1.300">
        <path d="M1 6h3l5-4.500v15L4 12H1zM12 6.500c1.500 1.500 1.500 3.500 0 5M15 4c3 3 3 7 0 10" />
        <path d="M18 1.500c4 4 4 11 0 15" stroke="#7c8594" />
      </Svg>
      <div className="ml-[11px] flex w-8 flex-col items-center pt-[7px]">
        <Fit className="w-[30px]">ENG</Fit>
        <Fit className="mt-[7px] w-[22px]">UK</Fit>
      </div>
      <div className="ml-3 flex w-[79px] flex-col items-center pt-[5px]">
        <Fit className="w-9">17:54</Fit>
        <Fit className="mt-[9px] w-[78px]">28/12/2018</Fit>
      </div>
      <Svg w={34} h={36} className="ml-5 mt-[11px]">
        <path d="M2 3h20v16h-9l-5 4v-4H2z" fill="#f3f5f8" />
        <path d="M6 7h13M6 10.500h13M6 14h10" stroke="#2b3342" strokeWidth="1.300" />
        <circle cx="22" cy="23.500" r="9.500" fill="#2b3140" stroke="#596071" />
        <text x="22" y="28.500" textAnchor="middle" fontSize="14" fontWeight="600" fill="#f3f5f8" fontFamily="Noto Sans">3</text>
      </Svg>
      <span className="ml-auto mr-[5px] h-[50px] w-px bg-[#4c5260]" />
    </div>
  );
}

export default function App() {
  return (
    <div className="flex h-[1080px] w-[1920px] flex-col overflow-hidden bg-[#e6e6e6] font-['Noto_Sans',sans-serif]">
      <TitleBar />
      <Ribbon />
      <FormulaBar />
      <Sheet />
      <SheetTabs />
      <StatusBar />
      <Taskbar />
    </div>
  );
}
